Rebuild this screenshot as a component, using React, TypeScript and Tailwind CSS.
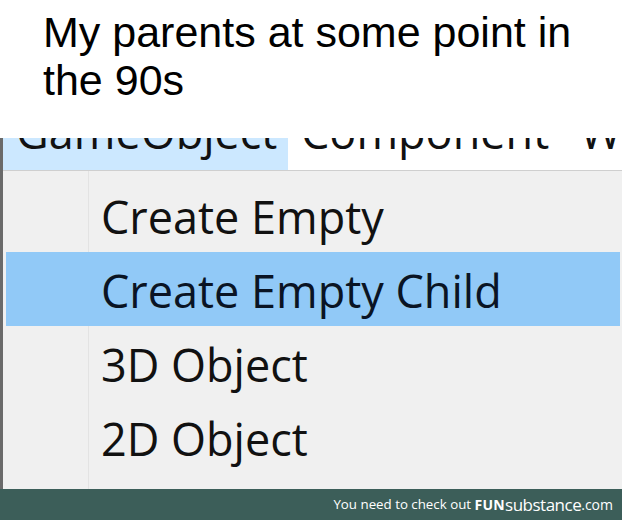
import React from "react";

const items = ["Create Empty", "Create Empty Child", "3D Object", "2D Object"];

export default function App() {
  return (
    <div className="w-[622px] h-[520px] flex flex-col bg-white overflow-hidden">
      {/* caption */}
      <div className="h-[138px] pl-[43px] pt-2 text-[43px] leading-[48px] text-black font-['Liberation_Sans',Arial,sans-serif]">
        My parents at some point in
        <br />
        the 90s
      </div>

      {/* cropped screenshot of the menu */}
      <div className="flex-1 flex flex-col border-l-[3px] border-[#6a6a6a] font-['Open_Sans','Noto_Sans',sans-serif] text-[#111111]">
        <div className="h-[33px] bg-white overflow-hidden border-b border-[#cfcfcf]">
          <div className="flex -mt-[29px] text-[45px] leading-[45px] whitespace-nowrap">
            <div className="shrink-0 w-[285px] pl-[13px] bg-[#cce8ff] h-[70px]">GameObject</div>
            <div className="shrink-0 pl-[13px] w-[292px]">Component</div>
            <div className="shrink-0">Window</div>
          </div>
        </div>

        <div className="flex-1 bg-[#f0f0f0] pt-[7px] bg-[linear-gradient(to_right,transparent_85px,#e3e3e3_85px,#e3e3e3_86px,transparent_86px)]">
          {items.map((label, i) => (
            <div
              key={label}
              className={
                i === 1
                  ? "h-[74px] ml-[3px] mr-[2px] pl-[95px] bg-[#91c9f7] text-[45px] leading-[77px] text-[#0a1424] whitespace-nowrap"
                  : "h-[74px] ml-[3px] mr-[2px] pl-[95px] text-[45px] leading-[77px] whitespace-nowrap"
              }
            >
              {label}
            </div>
          ))}
        </div>
      </div>

      {/* watermark bar */}
      <div className="h-[31px] bg-[#3c5e59] flex items-center justify-end pr-[9px] text-white font-['Open_Sans','Noto_Sans',sans-serif] whitespace-nowrap">
        <span className="text-[13.3px]">You need to check out&nbsp;</span>
        <span className="text-[14px] font-bold tracking-[0.3px]">FUN</span>
        <span className="text-[17px] leading-none tracking-[-0.5px]">substance</span>
        <span className="text-[14px]">.com</span>
      </div>
    </div>
  );
}
